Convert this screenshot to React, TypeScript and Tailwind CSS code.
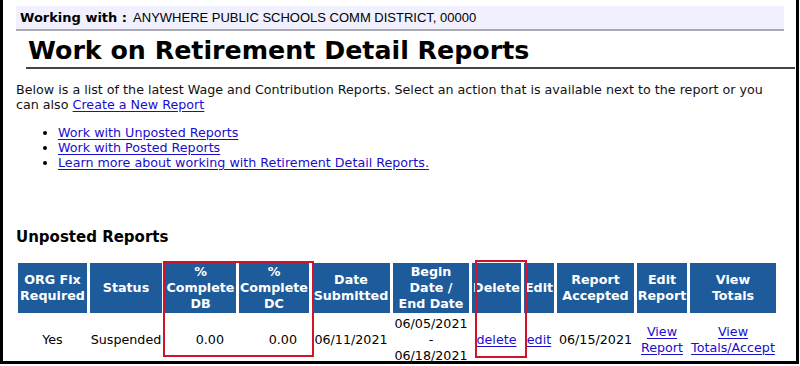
import React from "react";

const headers = [
  { label: ["ORG Fix", "Required"], w: "w-[69px]" },
  { label: ["Status"], w: "w-[72px]" },
  { label: ["%", "Complete", "DB"], w: "w-[71px]" },
  { label: ["%", "Complete", "DC"], w: "w-[70px]" },
  { label: ["Date", "Submitted"], w: "w-[78px]" },
  { label: ["Begin", "Date /", "End Date"], w: "w-[76px]" },
  { label: ["Delete"], w: "w-[49px]" },
  { label: ["Edit"], w: "w-[30px]" },
  { label: ["Report", "Accepted"], w: "w-[77px]" },
  { label: ["Edit", "Report"], w: "w-[50px]" },
  { label: ["View", "Totals"], w: "w-[86px]" },
];

const linkCls = "text-[#1a0dcc] underline underline-offset-2";

export default function App() {
  return (
    <div className="w-[800px] h-[366px] bg-white overflow-hidden">
      <div
        className="w-[799px] h-[364px] border-l-[3px] border-r-[3px] border-b-[3px] border-black text-black overflow-hidden"
        style={{ fontFamily: '"DejaVu Sans", Verdana, sans-serif' }}
      >
        <div className="pl-[13px] pr-[12px] pt-[6px]">
          <div className="h-[25px] bg-[#f0f0fe] border-b-2 border-[#a9a9b2] flex items-center pl-[4px] text-[13px]">
            <span className="font-bold">Working with :</span>
            <span className="ml-[6px] font-['Liberation_Sans',Arial,sans-serif] text-[13px]">
              ANYWHERE PUBLIC SCHOOLS COMM DISTRICT, 00000
            </span>
          </div>
        </div>

        <div className="ml-[23px] mr-[1px] mt-[3px] border-b-2 border-[#444] pl-[2px] h-[35px] flex items-center">
          <h1 className="text-[25.3px] font-bold leading-none">
            Work on Retirement Detail Reports
          </h1>
        </div>

        <p className="ml-[13px] mt-[13px] w-[756px] text-[12.7px] leading-[15px] text-[#111]">
          Below is a list of the latest Wage and Contribution Reports. Select an action that is available next to the report or you can also{" "}
          <a className={linkCls}>Create a New Report</a>
        </p>

        <ul className="ml-[55px] mt-[13px] list-disc text-[12.7px] leading-[15px]">
          <li><a className={linkCls}>Work with Unposted Reports</a></li>
          <li><a className={linkCls}>Work with Posted Reports</a></li>
          <li><a className={linkCls}>Learn more about working with Retirement Detail Reports.</a></li>
        </ul>

        <h2 className="ml-[13px] mt-[58px] text-[15px] font-bold leading-[18px]">Unposted Reports</h2>

        <div className="relative ml-[12px] mt-[14px] w-fit">
          <table className="table-fixed w-[763px] border-separate border-spacing-[3px] text-[12.7px] leading-[16px]">
            <thead>
              <tr>
                {headers.map((h, i) => (
                  <th
                    key={i}
                    className={`${h.w} h-[50px] bg-[#1e5b9b] text-white font-bold text-center align-middle p-0`}
                  >
                    {h.label.map((l, j) => (
                      <div key={j} className="whitespace-nowrap">{l}</div>
                    ))}
                  </th>
                ))}
              </tr>
            </thead>
            <tbody>
              <tr>
                <td className="text-center">Yes</td>
                <td className="text-center">Suspended</td>
                <td className="text-right pr-[12px]">0.00</td>
                <td className="text-right pr-[12px]">0.00</td>
                <td className="text-center">06/11/2021</td>
                <td className="text-center whitespace-nowrap">
                  <div>06/05/2021</div>
                  <div>-</div>
                  <div>06/18/2021</div>
                </td>
                <td className="text-center"><a className={linkCls}>delete</a></td>
                <td className="text-center"><a className={linkCls}>edit</a></td>
                <td className="text-center">06/15/2021</td>
                <td className="text-center">
                  <a className={linkCls}>View<br />Report</a>
                </td>
                <td className="text-center">
                  <a className={linkCls}>View<br />Totals/Accept</a>
                </td>
              </tr>
            </tbody>
          </table>
          {/* annotation boxes */}
          <div className="absolute left-[148px] top-[1px] w-[151px] h-[96px] border-2 border-[#d1142c]" />
          <div className="absolute left-[460px] top-0 w-[52px] h-[98px] border-2 border-[#d1142c]" />
        </div>
      </div>
    </div>
  );
}
